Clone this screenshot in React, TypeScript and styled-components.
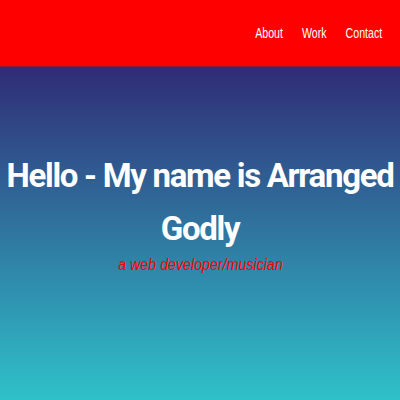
import styled, { createGlobalStyle } from "styled-components";

const GlobalStyle = createGlobalStyle`
  html, body {
    margin: 0;
    padding: 0;
  }
  body {
    font-family: "Liberation Sans", Arial, sans-serif;
  }
`;

const Page = styled.div`
  display: flex;
  flex-direction: column;
  width: 100%;
  height: 100vh;
`;

const Header = styled.header`
  display: flex;
  justify-content: flex-end;
  align-items: center;
  height: 66px;
  background: #ff0000;
  border-bottom: 1px solid #8a1a3a;
  padding-right: 18px;
`;

/* the original nav font is a narrow sans; squeeze Arial-metrics to match */
const Nav = styled.nav`
  display: flex;
  gap: 25px;
  transform: scaleX(0.76);
  transform-origin: right center;
`;

const NavLink = styled.a`
  color: #ffffff;
  font-size: 14px;
  text-decoration: none;
`;

const Hero = styled.main`
  flex: 1;
  display: flex;
  flex-direction: column;
  align-items: center;
  padding-top: 82px;
  background: linear-gradient(to bottom, #302c76, #2fc1ca);
`;

const Title = styled.h1`
  margin: 0;
  color: #ffffff;
  font-family: Roboto, "DejaVu Sans", sans-serif;
  font-weight: bold;
  font-size: 33px;
  line-height: 53px;
  letter-spacing: -1.3px;
  text-align: center;
`;

const Subtitle = styled.p`
  margin: 0;
  color: #ff0000;
  font-style: italic;
  font-size: 16px;
  line-height: 20px;
  transform: scaleX(0.89);
`;

export default function App() {
  return (
    <>
      <GlobalStyle />
      <Page>
        <Header>
          <Nav>
            <NavLink href="#">About</NavLink>
            <NavLink href="#">Work</NavLink>
            <NavLink href="#">Contact</NavLink>
          </Nav>
        </Header>
        <Hero>
          <Title>Hello - My name is Arranged Godly</Title>
          <Subtitle>a web developer/musician</Subtitle>
        </Hero>
      </Page>
    </>
  );
}
